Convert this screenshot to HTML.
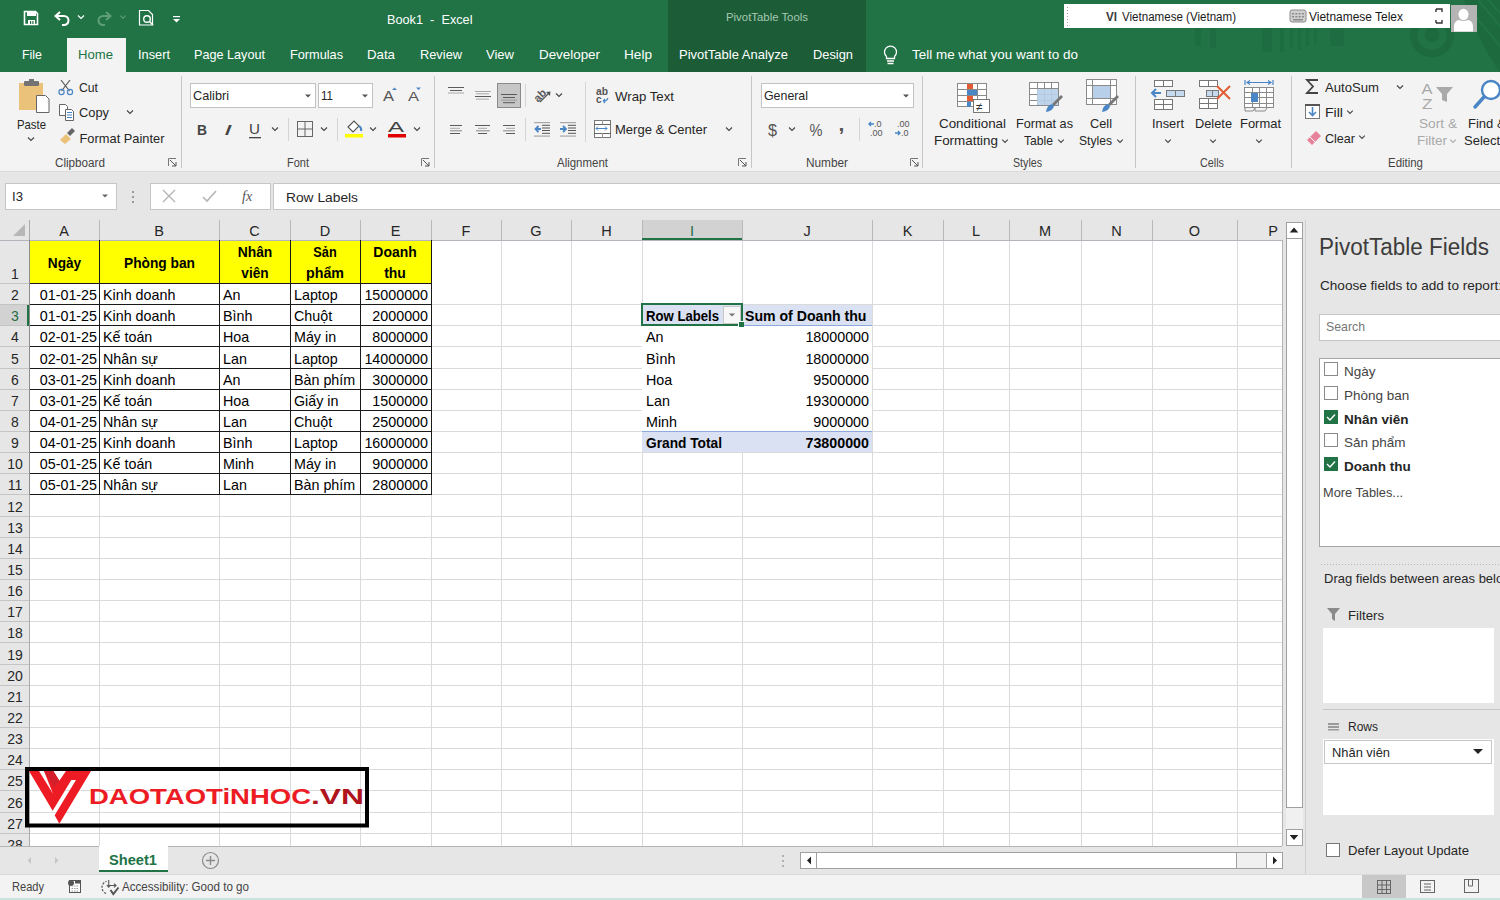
<!DOCTYPE html>
<html><head><meta charset="utf-8"><title>Book1 - Excel</title>
<style>
html,body{margin:0;padding:0;width:1500px;height:900px;overflow:hidden;background:#e6e6e6}
svg{display:block;font-family:"Liberation Sans",sans-serif}
</style></head><body>
<svg width="1500" height="900" viewBox="0 0 1500 900" shape-rendering="auto">
<rect x="0" y="0" width="1500" height="900" fill="#e6e6e6" />
<rect x="0" y="0" width="1500" height="72" fill="#217346" />
<rect x="668" y="0" width="198" height="72" fill="#1c5d38" />
<g fill="#1d6a3f"><circle cx="1432" cy="35" r="7.6"/><path d="M1464 0 Q1478 42 1500 72 L1500 0 Z"/></g>
<circle cx="1432" cy="35" r="18.5" fill="none" stroke="#1d6a3f" stroke-width="7.4"/>
<g stroke="#217346" stroke-width="2.2"><path d="M1478 0 L1500 26"/><path d="M1488 0 L1500 13"/><path d="M1470 10 L1500 46"/></g>
<g opacity="0.3" fill="#1a5f38"><rect x="1195" y="28" width="6" height="18"/><rect x="1210" y="28" width="6" height="20"/><rect x="1262" y="28" width="10" height="24"/><rect x="1280" y="28" width="4" height="24"/><rect x="1290" y="28" width="3" height="20"/><rect x="1298" y="28" width="3" height="22"/><rect x="1306" y="28" width="3" height="18"/><rect x="1314" y="28" width="3" height="16"/><rect x="1330" y="28" width="14" height="18"/></g>
<path d="M24.5 11.5 h11 l2 2 v11 h-13 z" fill="none" stroke="#ffffff" stroke-width="1.6" />
<rect x="27" y="12" width="9" height="4" fill="#ffffff" />
<rect x="28" y="20" width="7" height="5" fill="#ffffff" />
<rect x="30" y="21" width="1.2" height="3" fill="#217346" />
<rect x="32.3" y="21" width="1.2" height="3" fill="#217346" />
<path d="M57 16 h7 a4.5 4.5 0 0 1 0 9 h-2" fill="none" stroke="#ffffff" stroke-width="2" />
<path d="M60 12 L55.5 16 L60 20" fill="none" stroke="#ffffff" stroke-width="2" />
<path d="M78 15.5 L81 18.5 L84 15.5" fill="none" stroke="#ffffff" stroke-width="1.2" />
<path d="M110 16 h-7 a4.5 4.5 0 0 0 0 9 h2" fill="none" stroke="#5e9f79" stroke-width="2" />
<path d="M106 12 L110.5 16 L106 20" fill="none" stroke="#5e9f79" stroke-width="2" />
<path d="M120.4 15.7 L123 18.3 L125.6 15.7" fill="none" stroke="#5e9f79" stroke-width="1.1" />
<path d="M139.5 10.5 h9 l4 4 v10.5 h-13 z" fill="none" stroke="#ffffff" stroke-width="1.2" />
<circle cx="147" cy="19" r="3.3" fill="none" stroke="#ffffff" stroke-width="1.4"/>
<path d="M149.3 21.3 L153 25" fill="none" stroke="#ffffff" stroke-width="1.6" />
<rect x="173" y="16" width="7" height="1.2" fill="#ffffff" />
<path d="M173 19 h7 l-3.5 3.5z" fill="#ffffff" />
<text x="387" y="24" font-size="13.5" fill="#ffffff" textLength="85.5" lengthAdjust="spacingAndGlyphs" style="white-space:pre">Book1  -  Excel</text>
<text x="726" y="21" font-size="11.5" fill="#a6c8b2" textLength="82" lengthAdjust="spacingAndGlyphs" >PivotTable Tools</text>
<rect x="1064" y="4" width="386" height="24" fill="#ffffff" />
<rect x="1067" y="7" width="1" height="1" fill="#9a9a9a" />
<rect x="1067" y="10" width="1" height="1" fill="#9a9a9a" />
<rect x="1067" y="13" width="1" height="1" fill="#9a9a9a" />
<rect x="1067" y="16" width="1" height="1" fill="#9a9a9a" />
<rect x="1067" y="19" width="1" height="1" fill="#9a9a9a" />
<rect x="1067" y="22" width="1" height="1" fill="#9a9a9a" />
<rect x="1067" y="25" width="1" height="1" fill="#9a9a9a" />
<text x="1106" y="20.5" font-size="12.5" fill="#3a3a3a" font-weight="bold" textLength="11" lengthAdjust="spacingAndGlyphs" >VI</text>
<text x="1122" y="20.5" font-size="12.5" fill="#1a1a1a" textLength="114" lengthAdjust="spacingAndGlyphs" >Vietnamese (Vietnam)</text>
<rect x="1290" y="10" width="16" height="12" rx="2" fill="#d0d0d0" stroke="#8a8a8a" stroke-width="1"/>
<rect x="1292.0" y="13" width="2" height="1.5" fill="#8a8a8a" />
<rect x="1292.0" y="16" width="2" height="1.5" fill="#8a8a8a" />
<rect x="1295.3" y="13" width="2" height="1.5" fill="#8a8a8a" />
<rect x="1295.3" y="16" width="2" height="1.5" fill="#8a8a8a" />
<rect x="1298.6" y="13" width="2" height="1.5" fill="#8a8a8a" />
<rect x="1298.6" y="16" width="2" height="1.5" fill="#8a8a8a" />
<rect x="1301.9" y="13" width="2" height="1.5" fill="#8a8a8a" />
<rect x="1301.9" y="16" width="2" height="1.5" fill="#8a8a8a" />
<rect x="1293" y="19" width="10" height="1.5" fill="#8a8a8a" />
<text x="1309" y="21" font-size="12.5" fill="#1a1a1a" textLength="94" lengthAdjust="spacingAndGlyphs" >Vietnamese Telex</text>
<path d="M1436 9 h6 v3 M1436 9 v3" fill="none" stroke="#333" stroke-width="1.4" />
<path d="M1436 23 v-3 M1436 23 h6 v-3" fill="none" stroke="#333" stroke-width="1.4" />
<rect x="1451" y="5" width="26" height="27" fill="#b4b4b4" />
<ellipse cx="1463.5" cy="14.5" rx="5" ry="5.8" fill="#ffffff"/>
<path d="M1454 31.5 v-5 q0 -5.5 5 -6.5 q4.5 2 9 0 q5 1 5 6.5 v5 z" fill="#ffffff" />
<rect x="67" y="38" width="59" height="34" fill="#f3f3f3" />
<text x="22" y="59" font-size="13" fill="#ffffff" textLength="20" lengthAdjust="spacingAndGlyphs" >File</text>
<text x="78" y="59" font-size="13" fill="#217346" textLength="35" lengthAdjust="spacingAndGlyphs" >Home</text>
<text x="138" y="59" font-size="13" fill="#ffffff" textLength="32" lengthAdjust="spacingAndGlyphs" >Insert</text>
<text x="194" y="59" font-size="13" fill="#ffffff" textLength="71" lengthAdjust="spacingAndGlyphs" >Page Layout</text>
<text x="290" y="59" font-size="13" fill="#ffffff" textLength="53" lengthAdjust="spacingAndGlyphs" >Formulas</text>
<text x="367" y="59" font-size="13" fill="#ffffff" textLength="28" lengthAdjust="spacingAndGlyphs" >Data</text>
<text x="420" y="59" font-size="13" fill="#ffffff" textLength="42" lengthAdjust="spacingAndGlyphs" >Review</text>
<text x="486" y="59" font-size="13" fill="#ffffff" textLength="28" lengthAdjust="spacingAndGlyphs" >View</text>
<text x="539" y="59" font-size="13" fill="#ffffff" textLength="61" lengthAdjust="spacingAndGlyphs" >Developer</text>
<text x="624" y="59" font-size="13" fill="#ffffff" textLength="28" lengthAdjust="spacingAndGlyphs" >Help</text>
<text x="679" y="59" font-size="13" fill="#ffffff" textLength="109" lengthAdjust="spacingAndGlyphs" >PivotTable Analyze</text>
<text x="813" y="59" font-size="13" fill="#ffffff" textLength="40" lengthAdjust="spacingAndGlyphs" >Design</text>
<path d="M887 61 h7 M887.5 63.5 h6 M886.5 58.5 v-2 a6 6 0 1 1 8 0 v2 z" fill="none" stroke="#ffffff" stroke-width="1.3"/>
<text x="912" y="59" font-size="13" fill="#ffffff" textLength="166" lengthAdjust="spacingAndGlyphs" >Tell me what you want to do</text>
<rect x="0" y="72" width="1500" height="100" fill="#f3f3f3" />
<rect x="0" y="171" width="1500" height="1" fill="#dadada"/>
<rect x="181" y="76" width="1" height="92" fill="#c6c6c6"/>
<rect x="434" y="76" width="1" height="92" fill="#c6c6c6"/>
<rect x="751" y="76" width="1" height="92" fill="#c6c6c6"/>
<rect x="922" y="76" width="1" height="92" fill="#c6c6c6"/>
<rect x="1135" y="76" width="1" height="92" fill="#c6c6c6"/>
<rect x="1291" y="76" width="1" height="92" fill="#c6c6c6"/>
<rect x="19" y="83" width="24" height="27" fill="#eac27a" />
<rect x="24" y="81" width="15" height="5" rx="1" fill="#737373"/>
<rect x="29" y="79" width="5" height="3" fill="#737373" />
<path d="M36.5 95.5 h9 l3.5 3.5 v13.5 h-12.5 z" fill="#ffffff" stroke="#666" stroke-width="1" />
<text x="17" y="129" font-size="13" fill="#262626" textLength="29" lengthAdjust="spacingAndGlyphs" >Paste</text>
<path d="M28 137.5 L31 140.5 L34 137.5" fill="none" stroke="#444" stroke-width="1.1" />
<path d="M61 80 L69.5 91 M70 80 L61.5 91" fill="none" stroke="#555" stroke-width="1.2" />
<circle cx="61.5" cy="92" r="2.6" fill="none" stroke="#4a86c5" stroke-width="1.2"/>
<circle cx="70" cy="92" r="2.6" fill="none" stroke="#4a86c5" stroke-width="1.2"/>
<text x="79" y="92" font-size="13" fill="#262626" textLength="19" lengthAdjust="spacingAndGlyphs" >Cut</text>
<path d="M59.5 104.5 h6 l2 2 v9 h-8 z" fill="#fff" stroke="#666" stroke-width="1" />
<path d="M65.5 109.5 h6 l2 2 v9 h-8 z" fill="#fff" stroke="#666" stroke-width="1" />
<rect x="67" y="112" width="5" height="1" fill="#4a86c5" />
<rect x="67" y="114.5" width="5" height="1" fill="#4a86c5" />
<rect x="67" y="117" width="5" height="1" fill="#4a86c5" />
<text x="79" y="117" font-size="13" fill="#262626" textLength="30" lengthAdjust="spacingAndGlyphs" >Copy</text>
<path d="M127 110.5 L130 113.5 L133 110.5" fill="none" stroke="#444" stroke-width="1.1" />
<path d="M60 140 L66 134 L71 139 L65 144 z" fill="#eac27a" />
<path d="M67 133 L72 128 L75 131 L70 136 z" fill="#666" />
<text x="79.5" y="143" font-size="13" fill="#262626" textLength="85" lengthAdjust="spacingAndGlyphs" >Format Painter</text>
<text x="55" y="167" font-size="12" fill="#444" textLength="50" lengthAdjust="spacingAndGlyphs" >Clipboard</text>
<path d="M168.5 166 v-7.5 h7.5" fill="none" stroke="#777" stroke-width="1" />
<path d="M170 160 L176 166 M176 162 v4 h-4" fill="none" stroke="#555" stroke-width="1" />
<rect x="190.5" y="83.5" width="125" height="24" fill="#ffffff" stroke="#c2c2c2" stroke-width="1"/>
<text x="193" y="100" font-size="13" fill="#262626" textLength="36" lengthAdjust="spacingAndGlyphs" >Calibri</text>
<path d="M305 94.5 L311 94.5 L308 97.5Z" fill="#555" />
<rect x="318.5" y="83.5" width="54" height="24" fill="#ffffff" stroke="#c2c2c2" stroke-width="1"/>
<text x="321" y="100" font-size="13" fill="#262626" textLength="12" lengthAdjust="spacingAndGlyphs" >11</text>
<path d="M362 94.5 L368 94.5 L365 97.5Z" fill="#555" />
<text x="383" y="101" font-size="14" fill="#555" textLength="11" lengthAdjust="spacingAndGlyphs" >A</text>
<path d="M392 90 l2.5 -2.5 l2.5 2.5z" fill="#4a86c5" />
<text x="408" y="101" font-size="13" fill="#555" textLength="11" lengthAdjust="spacingAndGlyphs" >A</text>
<path d="M416 87.5 h5 l-2.5 2.5z" fill="#4a86c5" />
<text x="197" y="135" font-size="15" fill="#444" font-weight="bold" textLength="10" lengthAdjust="spacingAndGlyphs" >B</text>
<text x="224" y="135" font-size="15" fill="#444" textLength="8" lengthAdjust="spacingAndGlyphs" font-style="italic">I</text>
<text x="249" y="134" font-size="14" fill="#444" textLength="11" lengthAdjust="spacingAndGlyphs" >U</text>
<rect x="249" y="137" width="12" height="1.3" fill="#444"/>
<path d="M272 127.5 L275 130.5 L278 127.5" fill="none" stroke="#444" stroke-width="1.1" />
<rect x="288" y="118" width="1" height="23" fill="#d4d4d4"/>
<rect x="297.5" y="121.5" width="15" height="15" fill="none" stroke="#666" stroke-width="1"/>
<rect x="304.5" y="121" width="1" height="16" fill="#666"/>
<rect x="297" y="128.5" width="16" height="1" fill="#666"/>
<path d="M321 127.5 L324 130.5 L327 127.5" fill="none" stroke="#444" stroke-width="1.1" />
<rect x="337" y="118" width="1" height="23" fill="#d4d4d4"/>
<path d="M348 127 l6 -6 l5 5 l-6 6 z" fill="#fff" stroke="#555" stroke-width="1.1" />
<path d="M359 126 q3 2 2 5" fill="none" stroke="#4a86c5" stroke-width="2" />
<rect x="345" y="134" width="18" height="3.5" fill="#ffff00" />
<path d="M370 127.5 L373 130.5 L376 127.5" fill="none" stroke="#444" stroke-width="1.1" />
<text x="388" y="132" font-size="15" fill="#444" textLength="16" lengthAdjust="spacingAndGlyphs" >A</text>
<rect x="388" y="134" width="18" height="3.5" fill="#e00000" />
<path d="M414 127.5 L417 130.5 L420 127.5" fill="none" stroke="#444" stroke-width="1.1" />
<text x="287" y="167" font-size="12" fill="#444" textLength="22" lengthAdjust="spacingAndGlyphs" >Font</text>
<path d="M421.5 166 v-7.5 h7.5" fill="none" stroke="#777" stroke-width="1" />
<path d="M423 160 L429 166 M429 162 v4 h-4" fill="none" stroke="#555" stroke-width="1" />
<rect x="448" y="87" width="16" height="1" fill="#5a5a5a"/>
<rect x="450" y="90" width="12" height="1" fill="#5a5a5a"/>
<rect x="448" y="92.5" width="16" height="1" fill="#a8a8a8"/>
<rect x="475" y="91" width="16" height="1" fill="#a8a8a8"/>
<rect x="476" y="93.3" width="13" height="1" fill="#a8a8a8"/>
<rect x="475" y="96" width="16" height="1" fill="#5a5a5a"/>
<rect x="476" y="98.6" width="13" height="1" fill="#a8a8a8"/>
<rect x="497" y="83" width="24" height="25" fill="#c6c6c6" />
<rect x="497.5" y="83.5" width="23" height="24" fill="none" stroke="#8a8a8a" stroke-width="1"/>
<rect x="501" y="94" width="16" height="1" fill="#5a5a5a"/>
<rect x="503" y="97" width="12" height="1" fill="#5a5a5a"/>
<rect x="501" y="99.6" width="16" height="1" fill="#999"/>
<rect x="503" y="102.2" width="12" height="1" fill="#5a5a5a"/>
<rect x="525" y="84" width="1" height="23" fill="#d4d4d4"/>
<text x="534" y="101" font-size="11" fill="#555" font-weight="bold" transform="rotate(-45 538 97)">ab</text>
<path d="M540 102 L549.5 92.5" fill="none" stroke="#555" stroke-width="1.2" />
<path d="M546 92 L550.5 91.5 L550 96 z" fill="#555" />
<path d="M556 93.5 L559 96.5 L562 93.5" fill="none" stroke="#444" stroke-width="1.1" />
<rect x="585" y="82" width="1" height="60" fill="#d4d4d4"/>
<text x="596" y="95" font-size="10" fill="#555" font-weight="bold" textLength="12" lengthAdjust="spacingAndGlyphs" >ab</text>
<text x="596" y="102.5" font-size="10" fill="#555" font-weight="bold" >c</text>
<path d="M604 101 q3 0 4 -3 M603 101 l2 -2 M603 101 l2 2" fill="none" stroke="#4a86c5" stroke-width="1.1" />
<text x="615" y="101" font-size="13" fill="#262626" textLength="59" lengthAdjust="spacingAndGlyphs" >Wrap Text</text>
<rect x="450" y="125" width="12" height="1" fill="#5a5a5a"/>
<rect x="450" y="127.8" width="10" height="1" fill="#a8a8a8"/>
<rect x="450" y="130.3" width="12" height="1" fill="#888"/>
<rect x="450" y="133" width="10" height="1" fill="#5a5a5a"/>
<rect x="475" y="125" width="15" height="1" fill="#5a5a5a"/>
<rect x="478" y="127.8" width="9" height="1" fill="#a8a8a8"/>
<rect x="476" y="130.3" width="14" height="1" fill="#888"/>
<rect x="478" y="133" width="9" height="1" fill="#5a5a5a"/>
<rect x="503" y="125" width="12" height="1" fill="#5a5a5a"/>
<rect x="506" y="127.8" width="9" height="1" fill="#a8a8a8"/>
<rect x="503" y="130.3" width="12" height="1" fill="#888"/>
<rect x="506" y="133" width="9" height="1" fill="#5a5a5a"/>
<rect x="525" y="118" width="1" height="23" fill="#d4d4d4"/>
<rect x="534" y="122" width="16" height="1.2" fill="#a8a8a8"/>
<rect x="534" y="135.5" width="16" height="1.2" fill="#a8a8a8"/>
<rect x="542" y="124.8" width="8" height="1" fill="#555"/>
<rect x="542" y="127.5" width="8" height="1" fill="#555"/>
<rect x="542" y="130" width="8" height="1" fill="#555"/>
<rect x="542" y="132.8" width="8" height="1" fill="#555"/>
<rect x="560" y="122" width="16" height="1.2" fill="#a8a8a8"/>
<rect x="560" y="135.5" width="16" height="1.2" fill="#a8a8a8"/>
<rect x="568" y="124.8" width="8" height="1" fill="#555"/>
<rect x="568" y="127.5" width="8" height="1" fill="#555"/>
<rect x="568" y="130" width="8" height="1" fill="#555"/>
<rect x="568" y="132.8" width="8" height="1" fill="#555"/>
<path d="M541 129 h-5.5 M538.5 126 l-3 3 l3 3" fill="none" stroke="#4a86c5" stroke-width="1.8" />
<path d="M560 129 h5.5 M563 126 l3 3 l-3 3" fill="none" stroke="#4a86c5" stroke-width="1.8" />
<rect x="594.5" y="120.5" width="16" height="17" fill="#fff" stroke="#777" stroke-width="1"/>
<rect x="594" y="124" width="17" height="1" fill="#666"/>
<rect x="594" y="133" width="17" height="1" fill="#666"/>
<rect x="602" y="120" width="1" height="4" fill="#999"/>
<rect x="602" y="133" width="1" height="5" fill="#999"/>
<path d="M596 128.5 h11 M598 126.5 l-2 2 l2 2 M605 126.5 l2 2 l-2 2" fill="none" stroke="#4a86c5" stroke-width="1" />
<text x="615" y="134" font-size="13" fill="#262626" textLength="92" lengthAdjust="spacingAndGlyphs" >Merge &amp; Center</text>
<path d="M726 127.5 L729 130.5 L732 127.5" fill="none" stroke="#444" stroke-width="1.1" />
<text x="557" y="167" font-size="12" fill="#444" textLength="51" lengthAdjust="spacingAndGlyphs" >Alignment</text>
<path d="M738.5 166 v-7.5 h7.5" fill="none" stroke="#777" stroke-width="1" />
<path d="M740 160 L746 166 M746 162 v4 h-4" fill="none" stroke="#555" stroke-width="1" />
<rect x="761.5" y="83.5" width="152" height="24" fill="#ffffff" stroke="#c2c2c2" stroke-width="1"/>
<text x="764" y="100" font-size="13" fill="#262626" textLength="44" lengthAdjust="spacingAndGlyphs" >General</text>
<path d="M903 94.5 L909 94.5 L906 97.5Z" fill="#555" />
<text x="768" y="136" font-size="17" fill="#555" textLength="9" lengthAdjust="spacingAndGlyphs" >$</text>
<path d="M789 127.5 L792 130.5 L795 127.5" fill="none" stroke="#444" stroke-width="1.1" />
<text x="809.5" y="135.5" font-size="16.5" fill="#555" textLength="13" lengthAdjust="spacingAndGlyphs" >%</text>
<text x="838.5" y="131" font-size="21" fill="#555" font-weight="bold" >,</text>
<rect x="859" y="118" width="1" height="23" fill="#d4d4d4"/>
<text x="874" y="127" font-size="9" fill="#555" >.0</text>
<text x="870" y="136" font-size="9" fill="#555" >.00</text>
<path d="M869 124 h5 M871 122 l-2 2 l2 2" fill="none" stroke="#4a86c5" stroke-width="1.4" />
<text x="897" y="127" font-size="9" fill="#555" >.00</text>
<text x="901" y="136" font-size="9" fill="#555" >.0</text>
<path d="M895 133 h5 M898 131 l2 2 l-2 2" fill="none" stroke="#4a86c5" stroke-width="1.4" />
<text x="806" y="167" font-size="12" fill="#444" textLength="42" lengthAdjust="spacingAndGlyphs" >Number</text>
<path d="M910.5 166 v-7.5 h7.5" fill="none" stroke="#777" stroke-width="1" />
<path d="M912 160 L918 166 M918 162 v4 h-4" fill="none" stroke="#555" stroke-width="1" />
<rect x="957.5" y="83.5" width="29" height="23" fill="#fff" stroke="#8a8a8a" stroke-width="1"/>
<rect x="967" y="83" width="1" height="24" fill="#8a8a8a"/>
<rect x="977" y="83" width="1" height="24" fill="#8a8a8a"/>
<rect x="957" y="89" width="30" height="1" fill="#8a8a8a"/>
<rect x="957" y="95" width="30" height="1" fill="#8a8a8a"/>
<rect x="957" y="101" width="30" height="1" fill="#8a8a8a"/>
<rect x="967" y="84" width="6" height="5" fill="#e15b35" />
<rect x="967" y="90" width="10" height="5" fill="#4a86c5" />
<rect x="967" y="96" width="6" height="5" fill="#e15b35" />
<rect x="967" y="102" width="4" height="5" fill="#4a86c5" />
<rect x="973.5" y="99.5" width="16" height="13" fill="#fff" stroke="#777" stroke-width="1"/>
<text x="976" y="111" font-size="12" fill="#333" >≠</text>
<text x="939" y="128" font-size="13" fill="#262626" textLength="67" lengthAdjust="spacingAndGlyphs" >Conditional</text>
<text x="934" y="145" font-size="13" fill="#262626" textLength="64" lengthAdjust="spacingAndGlyphs" >Formatting</text>
<path d="M1002.2 139.6 L1005 142.4 L1007.8 139.6" fill="none" stroke="#444" stroke-width="1.1" />
<rect x="1029.5" y="82.5" width="29" height="23" fill="#fff" stroke="#8a8a8a" stroke-width="1"/>
<rect x="1037" y="82" width="1" height="24" fill="#8a8a8a"/>
<rect x="1044" y="82" width="1" height="24" fill="#8a8a8a"/>
<rect x="1051" y="82" width="1" height="24" fill="#8a8a8a"/>
<rect x="1029" y="88" width="30" height="1" fill="#8a8a8a"/>
<rect x="1029" y="94" width="30" height="1" fill="#8a8a8a"/>
<rect x="1029" y="100" width="30" height="1" fill="#8a8a8a"/>
<rect x="1037" y="89" width="21" height="16" fill="#b7cfe8" opacity="0.9"/>
<path d="M1052 104 L1061 95 L1063 97 L1054 106 z" fill="#777" />
<path d="M1046 112 q1 -7 6 -8 l2 2 q-1 5 -8 6z" fill="#4a86c5" />
<text x="1016" y="128" font-size="13" fill="#262626" textLength="57" lengthAdjust="spacingAndGlyphs" >Format as</text>
<text x="1024" y="145" font-size="13" fill="#262626" textLength="29" lengthAdjust="spacingAndGlyphs" >Table</text>
<path d="M1058.2 139.6 L1061 142.4 L1063.8 139.6" fill="none" stroke="#444" stroke-width="1.1" />
<rect x="1086.5" y="79.5" width="30" height="25" fill="#fff" stroke="#8a8a8a" stroke-width="1"/>
<rect x="1092" y="79" width="1" height="26" fill="#8a8a8a"/>
<rect x="1110" y="79" width="1" height="26" fill="#8a8a8a"/>
<rect x="1086" y="85" width="31" height="1" fill="#8a8a8a"/>
<rect x="1086" y="98" width="31" height="1" fill="#8a8a8a"/>
<rect x="1093" y="86" width="17" height="12" fill="#b7cfe8" />
<path d="M1108 104 L1117 95 L1119 97 L1110 106 z" fill="#777" />
<path d="M1102 112 q1 -7 6 -8 l2 2 q-1 5 -8 6z" fill="#4a86c5" />
<text x="1090" y="128" font-size="13" fill="#262626" textLength="22" lengthAdjust="spacingAndGlyphs" >Cell</text>
<text x="1079" y="145" font-size="13" fill="#262626" textLength="33" lengthAdjust="spacingAndGlyphs" >Styles</text>
<path d="M1117.2 139.6 L1120 142.4 L1122.8 139.6" fill="none" stroke="#444" stroke-width="1.1" />
<text x="1013" y="167" font-size="12" fill="#444" textLength="29" lengthAdjust="spacingAndGlyphs" >Styles</text>
<rect x="1154.5" y="80.5" width="18" height="6" fill="#fff" stroke="#777" stroke-width="1"/>
<rect x="1163" y="80" width="1" height="7" fill="#777"/>
<rect x="1154.5" y="99.5" width="18" height="10" fill="#fff" stroke="#777" stroke-width="1"/>
<rect x="1163" y="99" width="1" height="11" fill="#777"/>
<rect x="1154" y="104" width="19" height="1" fill="#777"/>
<rect x="1166.5" y="90.5" width="18" height="6" fill="#c5d9ef" stroke="#777" stroke-width="1"/>
<rect x="1175" y="90" width="1" height="7" fill="#777"/>
<path d="M1152 93 h9 M1156 89 l-4 4 l4 4" fill="none" stroke="#4a86c5" stroke-width="2" />
<text x="1152" y="128" font-size="13" fill="#262626" textLength="32" lengthAdjust="spacingAndGlyphs" >Insert</text>
<path d="M1165.2 139.6 L1168 142.4 L1170.8 139.6" fill="none" stroke="#444" stroke-width="1.1" />
<rect x="1199.5" y="80.5" width="18" height="6" fill="#fff" stroke="#777" stroke-width="1"/>
<rect x="1208" y="80" width="1" height="7" fill="#777"/>
<rect x="1199.5" y="98.5" width="18" height="10" fill="#fff" stroke="#777" stroke-width="1"/>
<rect x="1208" y="98" width="1" height="11" fill="#777"/>
<rect x="1199" y="103" width="19" height="1" fill="#777"/>
<rect x="1206.5" y="90.5" width="12" height="6" fill="#c5d9ef" stroke="#777" stroke-width="1"/>
<rect x="1212" y="90" width="1" height="7" fill="#777"/>
<path d="M1217 86 L1230 99 M1230 86 L1217 99" fill="none" stroke="#e15b35" stroke-width="2" />
<text x="1195" y="128" font-size="13" fill="#262626" textLength="37" lengthAdjust="spacingAndGlyphs" >Delete</text>
<path d="M1210.2 139.6 L1213 142.4 L1215.8 139.6" fill="none" stroke="#444" stroke-width="1.1" />
<path d="M1245 80 v5 M1273 80 v5 M1247 82.5 h24 M1250 80.5 l-3 2 l3 2 M1268 80.5 l3 2 l-3 2" fill="none" stroke="#4a86c5" stroke-width="1.2" />
<rect x="1244.5" y="87.5" width="29" height="20" fill="#fff" stroke="#8a8a8a" stroke-width="1"/>
<rect x="1252" y="87" width="1" height="21" fill="#8a8a8a"/>
<rect x="1259" y="87" width="1" height="21" fill="#8a8a8a"/>
<rect x="1266" y="87" width="1" height="21" fill="#8a8a8a"/>
<rect x="1244" y="92" width="30" height="1" fill="#8a8a8a"/>
<rect x="1244" y="97" width="30" height="1" fill="#8a8a8a"/>
<rect x="1244" y="103" width="30" height="1" fill="#8a8a8a"/>
<rect x="1251" y="93" width="7" height="9" fill="#4a86c5" />
<path d="M1245 108 v3 h8 l2 -3 M1255 108 v3 h10 l2 -3" fill="none" stroke="#8a8a8a" stroke-width="1" />
<text x="1240" y="128" font-size="13" fill="#262626" textLength="41" lengthAdjust="spacingAndGlyphs" >Format</text>
<path d="M1256.2 139.6 L1259 142.4 L1261.8 139.6" fill="none" stroke="#444" stroke-width="1.1" />
<text x="1200" y="167" font-size="12" fill="#444" textLength="24" lengthAdjust="spacingAndGlyphs" >Cells</text>
<path d="M1318 80 h-11 l6 6.5 l-6 6.5 h11" fill="none" stroke="#444" stroke-width="1.8" />
<text x="1325" y="92" font-size="13" fill="#262626" textLength="54" lengthAdjust="spacingAndGlyphs" >AutoSum</text>
<path d="M1397 85.5 L1400 88.5 L1403 85.5" fill="none" stroke="#444" stroke-width="1.1" />
<rect x="1305.5" y="104.5" width="14" height="14" fill="#fff" stroke="#777" stroke-width="1"/>
<rect x="1305" y="104" width="15" height="2" fill="#555"/>
<path d="M1312.5 107 v8 M1309 112 l3.5 3.5 l3.5 -3.5" fill="none" stroke="#4a86c5" stroke-width="1.6" />
<text x="1325" y="117" font-size="13" fill="#262626" textLength="18" lengthAdjust="spacingAndGlyphs" >Fill</text>
<path d="M1347.2 110.6 L1350 113.4 L1352.8 110.6" fill="none" stroke="#444" stroke-width="1.1" />
<path d="M1307 140 L1316 131 L1321 136 L1312 145 z" fill="#e8819a" />
<path d="M1310 137 l5 5" fill="none" stroke="#fff" stroke-width="1" />
<text x="1325" y="143" font-size="13" fill="#262626" textLength="30" lengthAdjust="spacingAndGlyphs" >Clear</text>
<path d="M1359.2 135.6 L1362 138.4 L1364.8 135.6" fill="none" stroke="#444" stroke-width="1.1" />
<text x="1421.5" y="93.5" font-size="14" fill="#a9a9a9" textLength="11" lengthAdjust="spacingAndGlyphs" >A</text>
<text x="1422" y="108.5" font-size="14" fill="#a9a9a9" textLength="10.5" lengthAdjust="spacingAndGlyphs" >Z</text>
<path d="M1436 87 h17 l-6 7 v8 l-5 -2 v-6 z" fill="#a9a9a9" />
<text x="1419" y="128" font-size="13" fill="#a9a9a9" textLength="38" lengthAdjust="spacingAndGlyphs" >Sort &amp;</text>
<text x="1417" y="145" font-size="13" fill="#a9a9a9" textLength="30" lengthAdjust="spacingAndGlyphs" >Filter</text>
<path d="M1450.2 139.6 L1453 142.4 L1455.8 139.6" fill="none" stroke="#a9a9a9" stroke-width="1.1" />
<circle cx="1491" cy="90" r="9" fill="#fff" stroke="#4a86c5" stroke-width="2.4"/>
<path d="M1484 97 L1475 107" fill="none" stroke="#4a86c5" stroke-width="3.4" stroke-linecap="round"/>
<text x="1468" y="128" font-size="13" fill="#262626" >Find &amp;</text>
<text x="1464" y="145" font-size="13" fill="#262626" >Select</text>
<text x="1388" y="167" font-size="12" fill="#444" textLength="35" lengthAdjust="spacingAndGlyphs" >Editing</text>
<rect x="5.5" y="183.5" width="111" height="26" fill="#ffffff" stroke="#c6c6c6" stroke-width="1"/>
<text x="12" y="201" font-size="13" fill="#262626" textLength="11" lengthAdjust="spacingAndGlyphs" >I3</text>
<path d="M102 194.5 L108 194.5 L105 197.5Z" fill="#666" />
<rect x="132" y="191" width="2" height="2" fill="#9a9a9a" />
<rect x="132" y="196" width="2" height="2" fill="#9a9a9a" />
<rect x="132" y="201" width="2" height="2" fill="#9a9a9a" />
<rect x="150.5" y="183.5" width="120" height="26" fill="#ffffff" stroke="#c6c6c6" stroke-width="1"/>
<path d="M163 190 L175 202 M175 190 L163 202" fill="none" stroke="#b5b5b5" stroke-width="1.4" />
<path d="M203 197 L207 201 L216 191" fill="none" stroke="#b5b5b5" stroke-width="1.6" />
<text x="242" y="201" font-size="14" fill="#555" font-family="Liberation Serif" font-style="italic">fx</text>
<rect x="273.5" y="183.5" width="1239" height="26" fill="#ffffff" stroke="#c6c6c6" stroke-width="1"/>
<text x="286" y="202" font-size="13" fill="#262626" textLength="72" lengthAdjust="spacingAndGlyphs" >Row Labels</text>
<rect x="29" y="241" width="1253" height="605" fill="#ffffff" />
<rect x="0" y="220" width="1282" height="20" fill="#e6e6e6" />
<rect x="642" y="220" width="100" height="20" fill="#d2d2d2" />
<path d="M25 224 L25 236 L13 236 z" fill="#b7b7b7" />
<rect x="0" y="241" width="29" height="605" fill="#e6e6e6" />
<rect x="0" y="305" width="29" height="20" fill="#d2d2d2" />
<rect x="99" y="241" width="1" height="605" fill="#dadada"/>
<rect x="219" y="241" width="1" height="605" fill="#dadada"/>
<rect x="290" y="241" width="1" height="605" fill="#dadada"/>
<rect x="360" y="241" width="1" height="605" fill="#dadada"/>
<rect x="431" y="241" width="1" height="605" fill="#dadada"/>
<rect x="501" y="241" width="1" height="605" fill="#dadada"/>
<rect x="571" y="241" width="1" height="605" fill="#dadada"/>
<rect x="642" y="241" width="1" height="605" fill="#dadada"/>
<rect x="742" y="241" width="1" height="605" fill="#dadada"/>
<rect x="872" y="241" width="1" height="605" fill="#dadada"/>
<rect x="943" y="241" width="1" height="605" fill="#dadada"/>
<rect x="1009" y="241" width="1" height="605" fill="#dadada"/>
<rect x="1081" y="241" width="1" height="605" fill="#dadada"/>
<rect x="1152" y="241" width="1" height="605" fill="#dadada"/>
<rect x="1237" y="241" width="1" height="605" fill="#dadada"/>
<rect x="30" y="304" width="1252" height="1" fill="#dadada"/>
<rect x="30" y="325" width="1252" height="1" fill="#dadada"/>
<rect x="30" y="346" width="1252" height="1" fill="#dadada"/>
<rect x="30" y="368" width="1252" height="1" fill="#dadada"/>
<rect x="30" y="389" width="1252" height="1" fill="#dadada"/>
<rect x="30" y="410" width="1252" height="1" fill="#dadada"/>
<rect x="30" y="431" width="1252" height="1" fill="#dadada"/>
<rect x="30" y="452" width="1252" height="1" fill="#dadada"/>
<rect x="30" y="473" width="1252" height="1" fill="#dadada"/>
<rect x="30" y="494" width="1252" height="1" fill="#dadada"/>
<rect x="30" y="516" width="1252" height="1" fill="#dadada"/>
<rect x="30" y="537" width="1252" height="1" fill="#dadada"/>
<rect x="30" y="558" width="1252" height="1" fill="#dadada"/>
<rect x="30" y="579" width="1252" height="1" fill="#dadada"/>
<rect x="30" y="600" width="1252" height="1" fill="#dadada"/>
<rect x="30" y="621" width="1252" height="1" fill="#dadada"/>
<rect x="30" y="642" width="1252" height="1" fill="#dadada"/>
<rect x="30" y="664" width="1252" height="1" fill="#dadada"/>
<rect x="30" y="685" width="1252" height="1" fill="#dadada"/>
<rect x="30" y="706" width="1252" height="1" fill="#dadada"/>
<rect x="30" y="727" width="1252" height="1" fill="#dadada"/>
<rect x="30" y="748" width="1252" height="1" fill="#dadada"/>
<rect x="30" y="769" width="1252" height="1" fill="#dadada"/>
<rect x="30" y="790" width="1252" height="1" fill="#dadada"/>
<rect x="30" y="812" width="1252" height="1" fill="#dadada"/>
<rect x="30" y="833" width="1252" height="1" fill="#dadada"/>
<rect x="30" y="854" width="1252" height="1" fill="#dadada"/>
<rect x="29" y="220" width="1" height="20" fill="#b9b9b9"/>
<rect x="99" y="220" width="1" height="20" fill="#b9b9b9"/>
<rect x="219" y="220" width="1" height="20" fill="#b9b9b9"/>
<rect x="290" y="220" width="1" height="20" fill="#b9b9b9"/>
<rect x="360" y="220" width="1" height="20" fill="#b9b9b9"/>
<rect x="431" y="220" width="1" height="20" fill="#b9b9b9"/>
<rect x="501" y="220" width="1" height="20" fill="#b9b9b9"/>
<rect x="571" y="220" width="1" height="20" fill="#b9b9b9"/>
<rect x="642" y="220" width="1" height="20" fill="#b9b9b9"/>
<rect x="742" y="220" width="1" height="20" fill="#b9b9b9"/>
<rect x="872" y="220" width="1" height="20" fill="#b9b9b9"/>
<rect x="943" y="220" width="1" height="20" fill="#b9b9b9"/>
<rect x="1009" y="220" width="1" height="20" fill="#b9b9b9"/>
<rect x="1081" y="220" width="1" height="20" fill="#b9b9b9"/>
<rect x="1152" y="220" width="1" height="20" fill="#b9b9b9"/>
<rect x="1237" y="220" width="1" height="20" fill="#b9b9b9"/>
<rect x="0" y="240" width="1282" height="1" fill="#b4b4bd"/>
<rect x="0" y="283" width="29" height="1" fill="#c4c4c4"/>
<rect x="0" y="304" width="29" height="1" fill="#c4c4c4"/>
<rect x="0" y="325" width="29" height="1" fill="#c4c4c4"/>
<rect x="0" y="346" width="29" height="1" fill="#c4c4c4"/>
<rect x="0" y="368" width="29" height="1" fill="#c4c4c4"/>
<rect x="0" y="389" width="29" height="1" fill="#c4c4c4"/>
<rect x="0" y="410" width="29" height="1" fill="#c4c4c4"/>
<rect x="0" y="431" width="29" height="1" fill="#c4c4c4"/>
<rect x="0" y="452" width="29" height="1" fill="#c4c4c4"/>
<rect x="0" y="473" width="29" height="1" fill="#c4c4c4"/>
<rect x="0" y="494" width="29" height="1" fill="#c4c4c4"/>
<rect x="0" y="516" width="29" height="1" fill="#c4c4c4"/>
<rect x="0" y="537" width="29" height="1" fill="#c4c4c4"/>
<rect x="0" y="558" width="29" height="1" fill="#c4c4c4"/>
<rect x="0" y="579" width="29" height="1" fill="#c4c4c4"/>
<rect x="0" y="600" width="29" height="1" fill="#c4c4c4"/>
<rect x="0" y="621" width="29" height="1" fill="#c4c4c4"/>
<rect x="0" y="642" width="29" height="1" fill="#c4c4c4"/>
<rect x="0" y="664" width="29" height="1" fill="#c4c4c4"/>
<rect x="0" y="685" width="29" height="1" fill="#c4c4c4"/>
<rect x="0" y="706" width="29" height="1" fill="#c4c4c4"/>
<rect x="0" y="727" width="29" height="1" fill="#c4c4c4"/>
<rect x="0" y="748" width="29" height="1" fill="#c4c4c4"/>
<rect x="0" y="769" width="29" height="1" fill="#c4c4c4"/>
<rect x="0" y="790" width="29" height="1" fill="#c4c4c4"/>
<rect x="0" y="812" width="29" height="1" fill="#c4c4c4"/>
<rect x="0" y="833" width="29" height="1" fill="#c4c4c4"/>
<rect x="0" y="854" width="29" height="1" fill="#c4c4c4"/>
<rect x="29" y="220" width="1" height="626" fill="#a9a9a9"/>
<rect x="642" y="238" width="100" height="2" fill="#217346" />
<rect x="27" y="305" width="2" height="21" fill="#217346" />
<text x="64.0" y="236" font-size="14.5" fill="#262626" text-anchor="middle" >A</text>
<text x="159.0" y="236" font-size="14.5" fill="#262626" text-anchor="middle" >B</text>
<text x="254.5" y="236" font-size="14.5" fill="#262626" text-anchor="middle" >C</text>
<text x="325.0" y="236" font-size="14.5" fill="#262626" text-anchor="middle" >D</text>
<text x="395.5" y="236" font-size="14.5" fill="#262626" text-anchor="middle" >E</text>
<text x="466.0" y="236" font-size="14.5" fill="#262626" text-anchor="middle" >F</text>
<text x="536.0" y="236" font-size="14.5" fill="#262626" text-anchor="middle" >G</text>
<text x="606.5" y="236" font-size="14.5" fill="#262626" text-anchor="middle" >H</text>
<text x="692.0" y="236" font-size="14.5" fill="#1f6e43" text-anchor="middle" >I</text>
<text x="807.0" y="236" font-size="14.5" fill="#262626" text-anchor="middle" >J</text>
<text x="907.5" y="236" font-size="14.5" fill="#262626" text-anchor="middle" >K</text>
<text x="976.0" y="236" font-size="14.5" fill="#262626" text-anchor="middle" >L</text>
<text x="1045.0" y="236" font-size="14.5" fill="#262626" text-anchor="middle" >M</text>
<text x="1116.5" y="236" font-size="14.5" fill="#262626" text-anchor="middle" >N</text>
<text x="1194.5" y="236" font-size="14.5" fill="#262626" text-anchor="middle" >O</text>
<text x="1273" y="236" font-size="14.5" fill="#262626" text-anchor="middle" >P</text>
<text x="15" y="278.5" font-size="14" fill="#262626" text-anchor="middle" >1</text>
<text x="15" y="299.5" font-size="14" fill="#262626" text-anchor="middle" >2</text>
<text x="15" y="320.5" font-size="14" fill="#1f6e43" text-anchor="middle" >3</text>
<text x="15" y="341.5" font-size="14" fill="#262626" text-anchor="middle" >4</text>
<text x="15" y="363.5" font-size="14" fill="#262626" text-anchor="middle" >5</text>
<text x="15" y="384.5" font-size="14" fill="#262626" text-anchor="middle" >6</text>
<text x="15" y="405.5" font-size="14" fill="#262626" text-anchor="middle" >7</text>
<text x="15" y="426.5" font-size="14" fill="#262626" text-anchor="middle" >8</text>
<text x="15" y="447.5" font-size="14" fill="#262626" text-anchor="middle" >9</text>
<text x="15" y="468.5" font-size="14" fill="#262626" text-anchor="middle" >10</text>
<text x="15" y="489.5" font-size="14" fill="#262626" text-anchor="middle" >11</text>
<text x="15" y="511.5" font-size="14" fill="#262626" text-anchor="middle" >12</text>
<text x="15" y="532.5" font-size="14" fill="#262626" text-anchor="middle" >13</text>
<text x="15" y="553.5" font-size="14" fill="#262626" text-anchor="middle" >14</text>
<text x="15" y="574.5" font-size="14" fill="#262626" text-anchor="middle" >15</text>
<text x="15" y="595.5" font-size="14" fill="#262626" text-anchor="middle" >16</text>
<text x="15" y="616.5" font-size="14" fill="#262626" text-anchor="middle" >17</text>
<text x="15" y="637.5" font-size="14" fill="#262626" text-anchor="middle" >18</text>
<text x="15" y="659.5" font-size="14" fill="#262626" text-anchor="middle" >19</text>
<text x="15" y="680.5" font-size="14" fill="#262626" text-anchor="middle" >20</text>
<text x="15" y="701.5" font-size="14" fill="#262626" text-anchor="middle" >21</text>
<text x="15" y="722.5" font-size="14" fill="#262626" text-anchor="middle" >22</text>
<text x="15" y="743.5" font-size="14" fill="#262626" text-anchor="middle" >23</text>
<text x="15" y="764.5" font-size="14" fill="#262626" text-anchor="middle" >24</text>
<text x="15" y="785.5" font-size="14" fill="#262626" text-anchor="middle" >25</text>
<text x="15" y="807.5" font-size="14" fill="#262626" text-anchor="middle" >26</text>
<text x="15" y="828.5" font-size="14" fill="#262626" text-anchor="middle" >27</text>
<text x="15" y="849.5" font-size="14" fill="#262626" text-anchor="middle" >28</text>
<rect x="30" y="241" width="401" height="42" fill="#ffff00" />
<rect x="29" y="283" width="403" height="1" fill="#1a1a1a"/>
<rect x="29" y="304" width="403" height="1" fill="#1a1a1a"/>
<rect x="29" y="325" width="403" height="1" fill="#1a1a1a"/>
<rect x="29" y="346" width="403" height="1" fill="#1a1a1a"/>
<rect x="29" y="368" width="403" height="1" fill="#1a1a1a"/>
<rect x="29" y="389" width="403" height="1" fill="#1a1a1a"/>
<rect x="29" y="410" width="403" height="1" fill="#1a1a1a"/>
<rect x="29" y="431" width="403" height="1" fill="#1a1a1a"/>
<rect x="29" y="452" width="403" height="1" fill="#1a1a1a"/>
<rect x="29" y="473" width="403" height="1" fill="#1a1a1a"/>
<rect x="29" y="494" width="403" height="1" fill="#1a1a1a"/>
<rect x="99" y="240" width="1" height="255" fill="#1a1a1a"/>
<rect x="219" y="240" width="1" height="255" fill="#1a1a1a"/>
<rect x="290" y="240" width="1" height="255" fill="#1a1a1a"/>
<rect x="360" y="240" width="1" height="255" fill="#1a1a1a"/>
<rect x="431" y="240" width="1" height="255" fill="#1a1a1a"/>
<rect x="29" y="240" width="1" height="255" fill="#8c8c8c"/>
<text x="64.5" y="268" font-size="14.3" fill="#000" font-weight="bold" text-anchor="middle" textLength="33.4" lengthAdjust="spacingAndGlyphs" >Ngày</text>
<text x="159.5" y="268" font-size="14.3" fill="#000" font-weight="bold" text-anchor="middle" textLength="71" lengthAdjust="spacingAndGlyphs" >Phòng ban</text>
<text x="255" y="257" font-size="14.3" fill="#000" font-weight="bold" text-anchor="middle" textLength="34.7" lengthAdjust="spacingAndGlyphs" >Nhân</text>
<text x="255" y="278" font-size="14.3" fill="#000" font-weight="bold" text-anchor="middle" textLength="27.3" lengthAdjust="spacingAndGlyphs" >viên</text>
<text x="325" y="257" font-size="14.3" fill="#000" font-weight="bold" text-anchor="middle" textLength="23.3" lengthAdjust="spacingAndGlyphs" >Sản</text>
<text x="325" y="278" font-size="14.3" fill="#000" font-weight="bold" text-anchor="middle" textLength="38" lengthAdjust="spacingAndGlyphs" >phẩm</text>
<text x="395" y="257" font-size="14.3" fill="#000" font-weight="bold" text-anchor="middle" textLength="43.3" lengthAdjust="spacingAndGlyphs" >Doanh</text>
<text x="395" y="278" font-size="14.3" fill="#000" font-weight="bold" text-anchor="middle" textLength="21.7" lengthAdjust="spacingAndGlyphs" >thu</text>
<text x="97" y="299.7" font-size="14.3" fill="#000" text-anchor="end" >01-01-25</text>
<text x="103" y="299.7" font-size="14.3" fill="#000" >Kinh doanh</text>
<text x="223" y="299.7" font-size="14.3" fill="#000" >An</text>
<text x="294" y="299.7" font-size="14.3" fill="#000" >Laptop</text>
<text x="428" y="299.7" font-size="14.3" fill="#000" text-anchor="end" >15000000</text>
<text x="97" y="320.7" font-size="14.3" fill="#000" text-anchor="end" >01-01-25</text>
<text x="103" y="320.7" font-size="14.3" fill="#000" >Kinh doanh</text>
<text x="223" y="320.7" font-size="14.3" fill="#000" >Bình</text>
<text x="294" y="320.7" font-size="14.3" fill="#000" >Chuột</text>
<text x="428" y="320.7" font-size="14.3" fill="#000" text-anchor="end" >2000000</text>
<text x="97" y="341.7" font-size="14.3" fill="#000" text-anchor="end" >02-01-25</text>
<text x="103" y="341.7" font-size="14.3" fill="#000" >Kế toán</text>
<text x="223" y="341.7" font-size="14.3" fill="#000" >Hoa</text>
<text x="294" y="341.7" font-size="14.3" fill="#000" >Máy in</text>
<text x="428" y="341.7" font-size="14.3" fill="#000" text-anchor="end" >8000000</text>
<text x="97" y="363.7" font-size="14.3" fill="#000" text-anchor="end" >02-01-25</text>
<text x="103" y="363.7" font-size="14.3" fill="#000" >Nhân sự</text>
<text x="223" y="363.7" font-size="14.3" fill="#000" >Lan</text>
<text x="294" y="363.7" font-size="14.3" fill="#000" >Laptop</text>
<text x="428" y="363.7" font-size="14.3" fill="#000" text-anchor="end" >14000000</text>
<text x="97" y="384.7" font-size="14.3" fill="#000" text-anchor="end" >03-01-25</text>
<text x="103" y="384.7" font-size="14.3" fill="#000" >Kinh doanh</text>
<text x="223" y="384.7" font-size="14.3" fill="#000" >An</text>
<text x="294" y="384.7" font-size="14.3" fill="#000" >Bàn phím</text>
<text x="428" y="384.7" font-size="14.3" fill="#000" text-anchor="end" >3000000</text>
<text x="97" y="405.7" font-size="14.3" fill="#000" text-anchor="end" >03-01-25</text>
<text x="103" y="405.7" font-size="14.3" fill="#000" >Kế toán</text>
<text x="223" y="405.7" font-size="14.3" fill="#000" >Hoa</text>
<text x="294" y="405.7" font-size="14.3" fill="#000" >Giấy in</text>
<text x="428" y="405.7" font-size="14.3" fill="#000" text-anchor="end" >1500000</text>
<text x="97" y="426.7" font-size="14.3" fill="#000" text-anchor="end" >04-01-25</text>
<text x="103" y="426.7" font-size="14.3" fill="#000" >Nhân sự</text>
<text x="223" y="426.7" font-size="14.3" fill="#000" >Lan</text>
<text x="294" y="426.7" font-size="14.3" fill="#000" >Chuột</text>
<text x="428" y="426.7" font-size="14.3" fill="#000" text-anchor="end" >2500000</text>
<text x="97" y="447.7" font-size="14.3" fill="#000" text-anchor="end" >04-01-25</text>
<text x="103" y="447.7" font-size="14.3" fill="#000" >Kinh doanh</text>
<text x="223" y="447.7" font-size="14.3" fill="#000" >Bình</text>
<text x="294" y="447.7" font-size="14.3" fill="#000" >Laptop</text>
<text x="428" y="447.7" font-size="14.3" fill="#000" text-anchor="end" >16000000</text>
<text x="97" y="468.7" font-size="14.3" fill="#000" text-anchor="end" >05-01-25</text>
<text x="103" y="468.7" font-size="14.3" fill="#000" >Kế toán</text>
<text x="223" y="468.7" font-size="14.3" fill="#000" >Minh</text>
<text x="294" y="468.7" font-size="14.3" fill="#000" >Máy in</text>
<text x="428" y="468.7" font-size="14.3" fill="#000" text-anchor="end" >9000000</text>
<text x="97" y="489.7" font-size="14.3" fill="#000" text-anchor="end" >05-01-25</text>
<text x="103" y="489.7" font-size="14.3" fill="#000" >Nhân sự</text>
<text x="223" y="489.7" font-size="14.3" fill="#000" >Lan</text>
<text x="294" y="489.7" font-size="14.3" fill="#000" >Bàn phím</text>
<text x="428" y="489.7" font-size="14.3" fill="#000" text-anchor="end" >2800000</text>
<rect x="642" y="305" width="230" height="20" fill="#d9e1f2" />
<rect x="742" y="325" width="130" height="1" fill="#8ea9db"/>
<rect x="642" y="326" width="230" height="105" fill="#ffffff" />
<rect x="642" y="432" width="230" height="20" fill="#d9e1f2" />
<rect x="642" y="431" width="230" height="1" fill="#8ea9db"/>
<text x="646" y="320.7" font-size="14.3" fill="#000" font-weight="bold" textLength="73" lengthAdjust="spacingAndGlyphs" >Row Labels</text>
<text x="745" y="320.7" font-size="14.3" fill="#000" font-weight="bold" textLength="121.5" lengthAdjust="spacingAndGlyphs" >Sum of Doanh thu</text>
<rect x="723.5" y="306.5" width="17" height="17" fill="#f7f7f7" stroke="#c8c8c8" stroke-width="1"/>
<path d="M728.8 313.4 L735.2 313.4 L732 316.6Z" fill="#777" />
<text x="646" y="341.7" font-size="14.3" fill="#000" >An</text>
<text x="869" y="341.7" font-size="14.3" fill="#000" text-anchor="end" >18000000</text>
<text x="646" y="363.7" font-size="14.3" fill="#000" >Bình</text>
<text x="869" y="363.7" font-size="14.3" fill="#000" text-anchor="end" >18000000</text>
<text x="646" y="384.7" font-size="14.3" fill="#000" >Hoa</text>
<text x="869" y="384.7" font-size="14.3" fill="#000" text-anchor="end" >9500000</text>
<text x="646" y="405.7" font-size="14.3" fill="#000" >Lan</text>
<text x="869" y="405.7" font-size="14.3" fill="#000" text-anchor="end" >19300000</text>
<text x="646" y="426.7" font-size="14.3" fill="#000" >Minh</text>
<text x="869" y="426.7" font-size="14.3" fill="#000" text-anchor="end" >9000000</text>
<text x="646" y="447.7" font-size="14.3" fill="#000" font-weight="bold" textLength="76" lengthAdjust="spacingAndGlyphs" >Grand Total</text>
<text x="869" y="447.7" font-size="14.3" fill="#000" font-weight="bold" text-anchor="end" textLength="63.5" lengthAdjust="spacingAndGlyphs" >73800000</text>
<rect x="642" y="304" width="100" height="21" fill="none" stroke="#217346" stroke-width="2"/>
<rect x="739" y="322" width="5" height="5" fill="#217346" />
<rect x="738" y="321" width="7" height="1" fill="#fff" />
<rect x="738" y="321" width="1" height="7" fill="#fff" />
<rect x="27" y="769" width="340" height="56.5" fill="none" stroke="#000" stroke-width="4"/>
<path d="M29 771 L39 771 L53 793.67 L44 771 L53.33 771 L59.33 780.67 L66 771 L91 771 L59.33 823.67 L54.67 815.33 L76 780 L71.33 780 L52.67 810.67 Z" fill="#ed1c24" />
<path d="M44 771 L53.33 771 L59.33 780.67 L54.67 788 Z" fill="#d3202a" />
<text x="89" y="804" font-size="22.5" fill="#ed1c24" font-weight="bold" textLength="222" lengthAdjust="spacingAndGlyphs" >DAOTAOTiNHOC</text>
<text x="311" y="804" font-size="22.5" fill="#b0141c" font-weight="bold" textLength="53" lengthAdjust="spacingAndGlyphs" >.VN</text>
<rect x="1282" y="220" width="24" height="627" fill="#e6e6e6" />
<rect x="1286.5" y="222.5" width="16" height="16" fill="#ffffff" stroke="#a0a0a0" stroke-width="1"/>
<path d="M1289.7 232.5 h8.6 l-4.3 -5z" fill="#222" />
<rect x="1286" y="238" width="17" height="592" fill="#f0f0f0" />
<rect x="1286.5" y="238.5" width="16" height="569" fill="#ffffff" stroke="#a0a0a0" stroke-width="1"/>
<rect x="1286.5" y="829.5" width="16" height="16" fill="#ffffff" stroke="#a0a0a0" stroke-width="1"/>
<path d="M1289.7 835 h8.6 l-4.3 5z" fill="#222" />
<rect x="1282" y="240" width="1" height="607" fill="#b4b4b4"/>
<rect x="1305" y="220" width="1" height="654" fill="#d0d0d0"/>
<rect x="0" y="846" width="1305" height="28" fill="#e6e6e6" />
<rect x="0" y="846" width="1282" height="1" fill="#b4b4b4"/>
<rect x="99" y="846" width="69" height="26" fill="#ffffff" />
<rect x="99" y="870" width="69" height="2" fill="#217346" />
<text x="109" y="865" font-size="14" fill="#217346" font-weight="bold" textLength="48" lengthAdjust="spacingAndGlyphs" >Sheet1</text>
<path d="M31 857 l-3.5 3.5 l3.5 3.5z" fill="#c6c6c6" />
<path d="M55 857 l3.5 3.5 l-3.5 3.5z" fill="#c6c6c6" />
<circle cx="210.5" cy="860.5" r="8" fill="none" stroke="#8a8a8a" stroke-width="1.2"/>
<path d="M206 860.5 h9 M210.5 856 v9" fill="none" stroke="#8a8a8a" stroke-width="1.4" />
<rect x="782" y="855" width="2" height="2" fill="#b0b0b0" />
<rect x="782" y="860" width="2" height="2" fill="#b0b0b0" />
<rect x="782" y="865" width="2" height="2" fill="#b0b0b0" />
<rect x="800.5" y="852.5" width="482" height="16" fill="#ffffff" stroke="#a0a0a0" stroke-width="1"/>
<rect x="816" y="852" width="1" height="17" fill="#a0a0a0"/>
<rect x="1237" y="853" width="29" height="15" fill="#f0f0f0" />
<rect x="1236" y="852" width="1" height="17" fill="#a0a0a0"/>
<rect x="1266" y="852" width="1" height="17" fill="#a0a0a0"/>
<path d="M811 856.5 v8 l-4 -4z" fill="#222" />
<path d="M1273 856.5 v8 l4 -4z" fill="#222" />
<rect x="0" y="874" width="1500" height="26" fill="#f3f3f3" />
<rect x="0" y="874" width="1500" height="1" fill="#dadada"/>
<rect x="0" y="898" width="1500" height="2" fill="#cbe3dd" />
<text x="12" y="891" font-size="13" fill="#444" textLength="32" lengthAdjust="spacingAndGlyphs" >Ready</text>
<rect x="69.5" y="880.5" width="11" height="12" fill="#ffffff" stroke="#555" stroke-width="1"/>
<rect x="75" y="880" width="6" height="3.5" fill="#555" />
<circle cx="71" cy="883" r="3" fill="#555"/>
<rect x="71.5" y="885.5" width="1.5" height="1" fill="#9a9a9a" />
<rect x="74.0" y="885.5" width="1.5" height="1" fill="#9a9a9a" />
<rect x="76.5" y="885.5" width="1.5" height="1" fill="#9a9a9a" />
<rect x="71.5" y="888" width="1.5" height="1" fill="#9a9a9a" />
<rect x="74.0" y="888" width="1.5" height="1" fill="#9a9a9a" />
<rect x="76.5" y="888" width="1.5" height="1" fill="#9a9a9a" />
<rect x="71.5" y="890.5" width="1.5" height="1" fill="#9a9a9a" />
<rect x="74.0" y="890.5" width="1.5" height="1" fill="#9a9a9a" />
<rect x="76.5" y="890.5" width="1.5" height="1" fill="#9a9a9a" />
<path d="M106 893.5 A6.5 6.5 0 0 1 106.5 881.3" fill="none" stroke="#555" stroke-width="1.2" stroke-dasharray="2.2 1.4"/>
<path d="M108.7 880 v7 M106.8 885 l1.9 2.2 l1.9 -2.2 M108.7 885.5 h7 M114 883.6 l2 1.9 l-2 1.9" fill="none" stroke="#555" stroke-width="1.1" />
<path d="M110.5 890 l2.8 4 l5.2 -6.5" fill="none" stroke="#555" stroke-width="2" />
<text x="122" y="891" font-size="13" fill="#444" textLength="127" lengthAdjust="spacingAndGlyphs" >Accessibility: Good to go</text>
<rect x="1362" y="875" width="44" height="23" fill="#c8c8c8" />
<rect x="1377.5" y="880.5" width="13" height="13" fill="none" stroke="#666" stroke-width="1"/>
<rect x="1381.5" y="880" width="1" height="14" fill="#666"/>
<rect x="1386" y="880" width="1" height="14" fill="#666"/>
<rect x="1377" y="884.5" width="14" height="1" fill="#666"/>
<rect x="1377" y="889" width="14" height="1" fill="#666"/>
<rect x="1420.5" y="880.5" width="14" height="12" fill="none" stroke="#666" stroke-width="1"/>
<rect x="1424" y="883.5" width="7" height="1" fill="#666"/>
<rect x="1424" y="886.5" width="7" height="1" fill="#666"/>
<rect x="1424" y="889.5" width="7" height="1" fill="#666"/>
<rect x="1464.5" y="879.5" width="14" height="13" fill="none" stroke="#666" stroke-width="1"/>
<path d="M1468.5 879 v7 h4 v-7" fill="none" stroke="#666" stroke-width="1" />
<rect x="1306" y="220" width="194" height="654" fill="#e6e6e6" />
<text x="1319" y="255" font-size="23.5" fill="#3c3c3c" textLength="170" lengthAdjust="spacingAndGlyphs" >PivotTable Fields</text>
<text x="1320" y="290" font-size="13" fill="#262626" textLength="182" lengthAdjust="spacingAndGlyphs" >Choose fields to add to report:</text>
<rect x="1319.5" y="314.5" width="189" height="26" fill="#ffffff" stroke="#c6c6c6" stroke-width="1"/>
<text x="1326" y="331" font-size="13" fill="#777" textLength="39" lengthAdjust="spacingAndGlyphs" >Search</text>
<rect x="1319.5" y="358.5" width="189" height="188" fill="#ffffff" stroke="#a6a6a6" stroke-width="1"/>
<rect x="1324.5" y="362.5" width="13" height="13" fill="#fff" stroke="#8a8a8a" stroke-width="1"/>
<text x="1344" y="376" font-size="13.5" fill="#444" >Ngày</text>
<rect x="1324.5" y="386.5" width="13" height="13" fill="#fff" stroke="#8a8a8a" stroke-width="1"/>
<text x="1344" y="400" font-size="13.5" fill="#444" >Phòng ban</text>
<rect x="1324" y="410" width="14" height="14" fill="#217346" />
<path d="M1327 417 l3 3 l5 -5.5" fill="none" stroke="#fff" stroke-width="1.4" />
<text x="1344" y="424" font-size="13.5" fill="#262626" font-weight="bold" >Nhân viên</text>
<rect x="1324.5" y="433.5" width="13" height="13" fill="#fff" stroke="#8a8a8a" stroke-width="1"/>
<text x="1344" y="447" font-size="13.5" fill="#444" >Sản phẩm</text>
<rect x="1324" y="457" width="14" height="14" fill="#217346" />
<path d="M1327 464 l3 3 l5 -5.5" fill="none" stroke="#fff" stroke-width="1.4" />
<text x="1344" y="471" font-size="13.5" fill="#262626" font-weight="bold" >Doanh thu</text>
<text x="1323" y="497" font-size="13" fill="#444" textLength="80" lengthAdjust="spacingAndGlyphs" >More Tables...</text>
<rect x="1321" y="564" width="1" height="1" fill="#b5b5b5" />
<rect x="1324" y="564" width="1" height="1" fill="#b5b5b5" />
<rect x="1327" y="564" width="1" height="1" fill="#b5b5b5" />
<rect x="1330" y="564" width="1" height="1" fill="#b5b5b5" />
<rect x="1333" y="564" width="1" height="1" fill="#b5b5b5" />
<rect x="1336" y="564" width="1" height="1" fill="#b5b5b5" />
<rect x="1339" y="564" width="1" height="1" fill="#b5b5b5" />
<rect x="1342" y="564" width="1" height="1" fill="#b5b5b5" />
<rect x="1345" y="564" width="1" height="1" fill="#b5b5b5" />
<rect x="1348" y="564" width="1" height="1" fill="#b5b5b5" />
<rect x="1351" y="564" width="1" height="1" fill="#b5b5b5" />
<rect x="1354" y="564" width="1" height="1" fill="#b5b5b5" />
<rect x="1357" y="564" width="1" height="1" fill="#b5b5b5" />
<rect x="1360" y="564" width="1" height="1" fill="#b5b5b5" />
<rect x="1363" y="564" width="1" height="1" fill="#b5b5b5" />
<rect x="1366" y="564" width="1" height="1" fill="#b5b5b5" />
<rect x="1369" y="564" width="1" height="1" fill="#b5b5b5" />
<rect x="1372" y="564" width="1" height="1" fill="#b5b5b5" />
<rect x="1375" y="564" width="1" height="1" fill="#b5b5b5" />
<rect x="1378" y="564" width="1" height="1" fill="#b5b5b5" />
<rect x="1381" y="564" width="1" height="1" fill="#b5b5b5" />
<rect x="1384" y="564" width="1" height="1" fill="#b5b5b5" />
<rect x="1387" y="564" width="1" height="1" fill="#b5b5b5" />
<rect x="1390" y="564" width="1" height="1" fill="#b5b5b5" />
<rect x="1393" y="564" width="1" height="1" fill="#b5b5b5" />
<rect x="1396" y="564" width="1" height="1" fill="#b5b5b5" />
<rect x="1399" y="564" width="1" height="1" fill="#b5b5b5" />
<rect x="1402" y="564" width="1" height="1" fill="#b5b5b5" />
<rect x="1405" y="564" width="1" height="1" fill="#b5b5b5" />
<rect x="1408" y="564" width="1" height="1" fill="#b5b5b5" />
<rect x="1411" y="564" width="1" height="1" fill="#b5b5b5" />
<rect x="1414" y="564" width="1" height="1" fill="#b5b5b5" />
<rect x="1417" y="564" width="1" height="1" fill="#b5b5b5" />
<rect x="1420" y="564" width="1" height="1" fill="#b5b5b5" />
<rect x="1423" y="564" width="1" height="1" fill="#b5b5b5" />
<rect x="1426" y="564" width="1" height="1" fill="#b5b5b5" />
<rect x="1429" y="564" width="1" height="1" fill="#b5b5b5" />
<rect x="1432" y="564" width="1" height="1" fill="#b5b5b5" />
<rect x="1435" y="564" width="1" height="1" fill="#b5b5b5" />
<rect x="1438" y="564" width="1" height="1" fill="#b5b5b5" />
<rect x="1441" y="564" width="1" height="1" fill="#b5b5b5" />
<rect x="1444" y="564" width="1" height="1" fill="#b5b5b5" />
<rect x="1447" y="564" width="1" height="1" fill="#b5b5b5" />
<rect x="1450" y="564" width="1" height="1" fill="#b5b5b5" />
<rect x="1453" y="564" width="1" height="1" fill="#b5b5b5" />
<rect x="1456" y="564" width="1" height="1" fill="#b5b5b5" />
<rect x="1459" y="564" width="1" height="1" fill="#b5b5b5" />
<rect x="1462" y="564" width="1" height="1" fill="#b5b5b5" />
<rect x="1465" y="564" width="1" height="1" fill="#b5b5b5" />
<rect x="1468" y="564" width="1" height="1" fill="#b5b5b5" />
<rect x="1471" y="564" width="1" height="1" fill="#b5b5b5" />
<rect x="1474" y="564" width="1" height="1" fill="#b5b5b5" />
<rect x="1477" y="564" width="1" height="1" fill="#b5b5b5" />
<rect x="1480" y="564" width="1" height="1" fill="#b5b5b5" />
<rect x="1483" y="564" width="1" height="1" fill="#b5b5b5" />
<rect x="1486" y="564" width="1" height="1" fill="#b5b5b5" />
<rect x="1489" y="564" width="1" height="1" fill="#b5b5b5" />
<rect x="1492" y="564" width="1" height="1" fill="#b5b5b5" />
<rect x="1495" y="564" width="1" height="1" fill="#b5b5b5" />
<rect x="1498" y="564" width="1" height="1" fill="#b5b5b5" />
<text x="1324" y="583" font-size="13" fill="#262626" >Drag fields between areas below:</text>
<path d="M1327 608 h13 l-5 6 v7 l-3 -2 v-5z" fill="#8a8a8a" />
<text x="1348" y="620" font-size="13" fill="#262626" textLength="36" lengthAdjust="spacingAndGlyphs" >Filters</text>
<rect x="1323" y="628" width="171" height="75" fill="#ffffff" />
<rect x="1323" y="709" width="177" height="1" fill="#c6c6c6"/>
<rect x="1328" y="723" width="11" height="2" fill="#9a9a9a" />
<rect x="1328" y="726" width="11" height="2" fill="#9a9a9a" />
<rect x="1328" y="729" width="11" height="1.5" fill="#9a9a9a" />
<text x="1348" y="731" font-size="13" fill="#262626" textLength="30" lengthAdjust="spacingAndGlyphs" >Rows</text>
<rect x="1323" y="739" width="171" height="76" fill="#ffffff" />
<rect x="1324.5" y="740.5" width="167" height="23" fill="#ffffff" stroke="#c6c6c6" stroke-width="1"/>
<text x="1332" y="757" font-size="13" fill="#262626" textLength="58" lengthAdjust="spacingAndGlyphs" >Nhân viên</text>
<path d="M1473 749 h10 l-5 5z" fill="#222" />
<rect x="1326.5" y="843.5" width="13" height="13" fill="#ffffff" stroke="#777" stroke-width="1"/>
<text x="1348" y="855" font-size="13" fill="#262626" textLength="121" lengthAdjust="spacingAndGlyphs" >Defer Layout Update</text>
</svg>
</body></html>
